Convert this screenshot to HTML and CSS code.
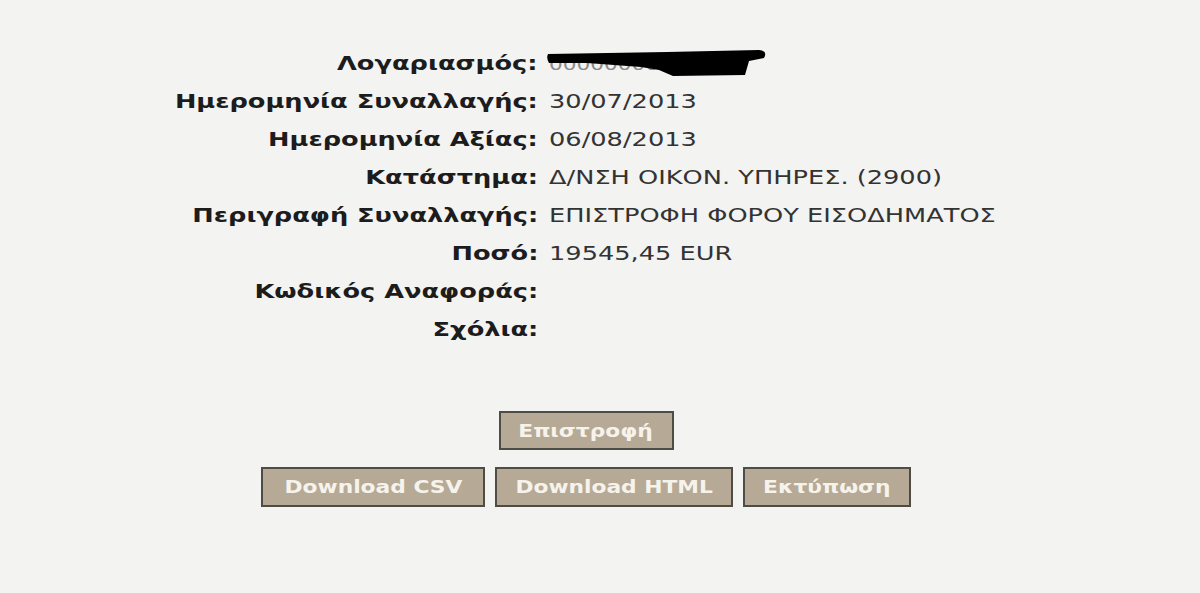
FILE: index.html
```html
<!DOCTYPE html>
<html lang="el">
<head>
  <meta charset="UTF-8">
  <title>Λεπτομέρειες Κίνησης</title>
  <link rel="stylesheet" href="styles.css">
</head>
<body>
  <div class="details">
    <div class="label"><span>Λογαριασμός:</span></div>
    <div class="value hidden-acc">
      <span class="acc-digits">000000000000-4</span>
      <svg class="scribble" width="222" height="38" viewBox="0 0 222 38">
        <path d="M1 10 L120 8 L212 6 Q221 7 217 14 L202 17 L198 31 L126 32 L112 26 L94 23 L40 19 L2 19 Q-1 14 1 10 Z" fill="#000"/>
      </svg>
    </div>

    <div class="label"><span>Ημερομηνία Συναλλαγής:</span></div>
    <div class="value"><span>30/07/2013</span></div>

    <div class="label"><span>Ημερομηνία Αξίας:</span></div>
    <div class="value"><span>06/08/2013</span></div>

    <div class="label"><span>Κατάστημα:</span></div>
    <div class="value"><span>Δ/ΝΣΗ ΟΙΚΟΝ. ΥΠΗΡΕΣ. (2900)</span></div>

    <div class="label"><span>Περιγραφή Συναλλαγής:</span></div>
    <div class="value"><span>ΕΠΙΣΤΡΟΦΗ ΦΟΡΟΥ ΕΙΣΟΔΗΜΑΤΟΣ</span></div>

    <div class="label"><span>Ποσό:</span></div>
    <div class="value"><span>19545,45 EUR</span></div>

    <div class="label"><span>Κωδικός Αναφοράς:</span></div>
    <div class="value"></div>

    <div class="label"><span>Σχόλια:</span></div>
    <div class="value"></div>
  </div>

  <div class="actions">
    <div class="btn-row">
      <button class="btn btn-back"><span>Επιστροφή</span></button>
    </div>
    <div class="btn-row">
      <button class="btn btn-csv"><span>Download CSV</span></button>
      <button class="btn btn-html"><span>Download HTML</span></button>
      <button class="btn btn-print"><span>Εκτύπωση</span></button>
    </div>
  </div>
</body>
</html>
```

FILE: styles.css
```css
body {
  margin: 0;
  padding: 0;
  background: #f3f3f2;
  font-family: "DejaVu Sans", Verdana, sans-serif;
}

.details {
  display: grid;
  grid-template-columns: 538px 1fr;
  column-gap: 11px;
  padding-top: 44px;
}

/* the old bank page renders everything wide, so stretch the glyphs */
.label span,
.value span {
  display: inline-block;
  transform: scaleX(1.35);
}

.label {
  text-align: right;
  font-weight: bold;
  font-size: 19px;
  line-height: 38px;
  height: 38px;
  color: #1c1c1c;
}

.label span {
  transform-origin: right center;
}

.value {
  font-size: 19px;
  line-height: 38px;
  height: 38px;
  color: #333;
  white-space: nowrap;
}

.value span {
  transform-origin: left center;
}

.hidden-acc {
  position: relative;
}

.value .acc-digits {
  color: #8a8a8a;
  font-size: 16px;
}

.scribble {
  position: absolute;
  left: -2px;
  top: 0;
}

.actions {
  width: 1172px;
  margin-top: 63px;
  display: flex;
  flex-direction: column;
  align-items: center;
  gap: 17px;
}

.btn-row {
  display: flex;
  gap: 10px;
}

.btn {
  font-family: "DejaVu Sans", Tahoma, sans-serif;
  font-weight: bold;
  font-size: 17px;
  color: #f6f3ec;
  background: #b6aa96;
  border: 2px solid #4f4b45;
  height: 40px;
  padding: 0;
  margin: 0;
  cursor: pointer;
}

.btn span {
  display: inline-block;
  transform: scaleX(1.28);
}

.btn-back { width: 175px; height: 39px; }
.btn-csv { width: 224px; }
.btn-html { width: 238px; }
.btn-print { width: 168px; }
```
